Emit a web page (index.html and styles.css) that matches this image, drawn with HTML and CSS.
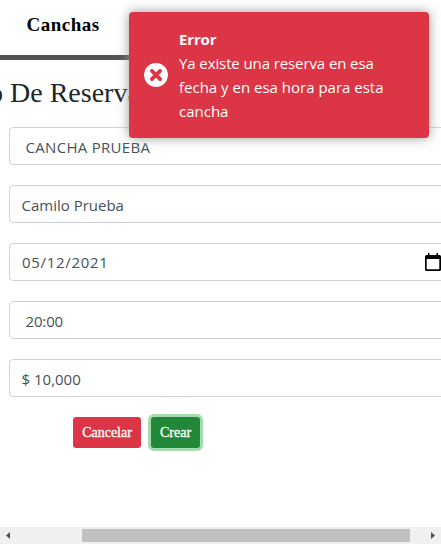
FILE: index.html
```html
<!DOCTYPE html>
<html lang="es">
<head>
<meta charset="utf-8">
<title>Reservas</title>
<link rel="stylesheet" href="styles.css">
</head>
<body>
<header class="navbar"><a class="nav-link">Canchas</a></header>
<main class="content">
  <h1 class="title"><span class="title-text">o De Reservas</span></h1>
  <form class="form">
    <div class="field select"><span class="t-court">CANCHA PRUEBA</span></div>
    <div class="field"><span class="t-name">Camilo Prueba</span></div>
    <div class="field date"><span class="t-date">05/12/2021</span>
      <svg class="calendar" viewBox="0 0 16 18" width="16" height="18"><path d="M3 0h1.500v2h7V0H13v2h1.500a1.500 1.500 0 0 1 1.500 1.500V16.500a1.500 1.500 0 0 1-1.500 1.500H1.500A1.500 1.500 0 0 1 0 16.500V3.500A1.500 1.500 0 0 1 1.500 2H3zM1.700 6v10.300h12.600V6z" fill="#000" fill-rule="evenodd"/></svg>
    </div>
    <div class="field select"><span class="t-hour">20:00</span></div>
    <div class="field"><span class="t-price">$ 10,000</span></div>
    <div class="actions">
      <button type="button" class="btn cancel">Cancelar</button>
      <button type="button" class="btn create">Crear</button>
    </div>
  </form>
</main>
<footer class="scrollbar">
  <svg class="arrow" viewBox="0 0 4 7" width="4" height="7"><path d="M4 0v7L0 3.500z" fill="#505050"/></svg>
  <div class="thumb"></div>
  <svg class="arrow" viewBox="0 0 4 7" width="4" height="7"><path d="M0 0v7L4 3.500z" fill="#505050"/></svg>
</footer>
<aside class="toast" role="alert">
  <svg class="toast-icon" viewBox="0 0 24 24" width="24" height="24"><circle cx="12" cy="12" r="11.900" fill="#fff"/><path d="M7.900 7.900l8.200 8.200M16.100 7.900l-8.200 8.200" stroke="#dc3545" stroke-width="3.800" stroke-linecap="round"/></svg>
  <div class="toast-body"><strong class="t-error">Error</strong><span class="t-line1">Ya existe una reserva en esa</span><span class="t-line2">fecha y en esa hora para esta</span><span class="t-line3">cancha</span></div>
</aside>
</body>
</html>
```

FILE: styles.css
```css
* { box-sizing: border-box; }
body {
  margin: 0;
  height: 544px;
  overflow: hidden;
  display: flex;
  flex-direction: column;
  background: #fff;
  font: 16px/24px "Open Sans", "Noto Sans", sans-serif;
  color: #495057;
}
.navbar {
  width: 300px;
  height: 60px;
  padding: 12px 0 0 26.5px;
  border-bottom: 5px solid #555250;
}
.nav-link {
  font: bold 19px/26px "Liberation Serif", serif;
  letter-spacing: 0.5px;
  color: #000;
}
.content { flex: 1; }
.title {
  margin: 0;
  height: 67px;
  padding-top: 16px;
  margin-left: -11px;
  font: 28px/34px "Liberation Serif", serif;
  color: #212529;
  white-space: nowrap;
}
.form {
  width: 452px;
  margin-left: 9px;
  display: flex;
  flex-direction: column;
  gap: 20px;
}
.field {
  height: 38px;
  padding: 1px 12px 0 11.5px;
  display: flex;
  align-items: center;
  border: 1px solid #ced4da;
  border-radius: 4px;
  font-size: 15px;
  white-space: nowrap;
}
.field.select { padding-left: 15.5px; }
.field.date { padding: 0 19px 0 12px; justify-content: space-between; }
.t-court { letter-spacing: 0.3px; }
.t-date { letter-spacing: 0.7px; }
.t-hour { letter-spacing: -0.15px; }
.actions { display: flex; gap: 10px; padding-left: 64px; }
.btn {
  height: 31px;
  padding: 0;
  border: 0;
  border-radius: 3px;
  color: #fff;
  font: 14px/21px "Liberation Serif", serif;
  -webkit-text-stroke: 0.3px #fff;
}
.cancel { width: 68px; background: #dc3545; }
.create { width: 49px; background: #218838; box-shadow: 0 0 0 3px #a5dab1; }
.scrollbar {
  height: 17px;
  padding: 0 6px;
  display: flex;
  align-items: center;
  background: #f0f0f0;
}
.thumb { width: 328px; height: 13px; margin: 0 21px 0 72px; background: #c1c1c1; }
.arrow { flex: none; }
.toast {
  position: absolute;
  left: 129px;
  top: 12px;
  width: 300px;
  height: 126px;
  padding: 15px;
  display: flex;
  align-items: center;
  gap: 11px;
  border-radius: 4px;
  background: #dc3545;
  box-shadow: 0 0 12px #999;
  color: #fff;
}
.toast-icon { flex: none; }
.toast-body { display: flex; flex-direction: column; font-size: 15px; white-space: nowrap; }
.t-error { letter-spacing: -0.15px; }
.t-line1 { letter-spacing: -0.1px; }
```
